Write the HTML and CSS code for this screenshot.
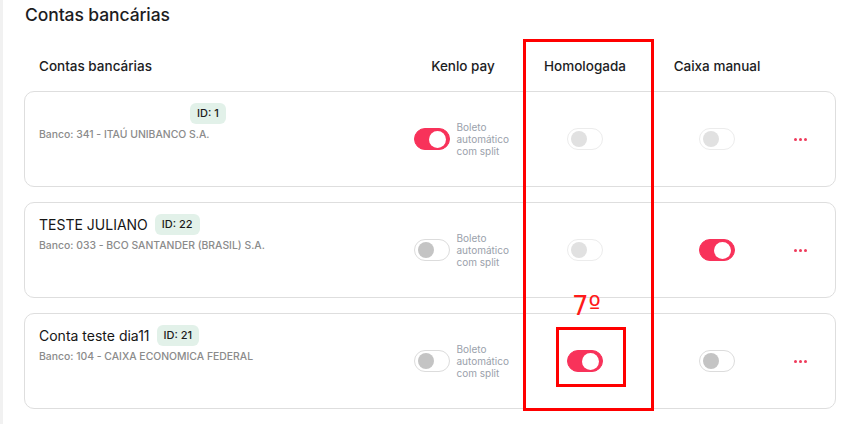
FILE: index.html
```html
<!DOCTYPE html>
<html lang="pt-BR">
<head>
<meta charset="utf-8">
<title>Contas bancárias</title>
<link rel="stylesheet" href="styles.css">
</head>
<body>
<div class="page">
  <h1 class="title">Contas bancárias</h1>
  <div class="row head">
    <div class="c-main">Contas bancárias</div>
    <div class="c-mid">Kenlo pay</div>
    <div class="c-mid">Homologada</div>
    <div class="c-mid">Caixa manual</div>
    <div></div>
  </div>

  <div class="row card">
    <div class="info">
      <div class="name-line"><span class="name blank"></span><span class="badge">ID: 1</span></div>
      <div class="bank">Banco: 341 - ITAÚ UNIBANCO S.A.</div>
    </div>
    <div class="kenlo"><span class="tog on"><span class="knob"></span></span><span class="boleto">Boleto<br>automático<br>com split</span></div>
    <div class="c-mid"><span class="tog dis"><span class="knob"></span></span></div>
    <div class="c-mid"><span class="tog dis"><span class="knob"></span></span></div>
    <div class="dots"><i></i><i></i><i></i></div>
  </div>

  <div class="row card">
    <div class="info">
      <div class="name-line"><span class="name">TESTE JULIANO</span><span class="badge">ID: 22</span></div>
      <div class="bank">Banco: 033 - BCO SANTANDER (BRASIL) S.A.</div>
    </div>
    <div class="kenlo"><span class="tog off"><span class="knob"></span></span><span class="boleto">Boleto<br>automático<br>com split</span></div>
    <div class="c-mid"><span class="tog dis"><span class="knob"></span></span></div>
    <div class="c-mid"><span class="tog on"><span class="knob"></span></span></div>
    <div class="dots"><i></i><i></i><i></i></div>
  </div>

  <div class="row card">
    <div class="info">
      <div class="name-line"><span class="name">Conta teste dia11</span><span class="badge">ID: 21</span></div>
      <div class="bank">Banco: 104 - CAIXA ECONOMICA FEDERAL</div>
    </div>
    <div class="kenlo"><span class="tog off"><span class="knob"></span></span><span class="boleto">Boleto<br>automático<br>com split</span></div>
    <div class="c-mid"><span class="tog on"><span class="knob"></span></span></div>
    <div class="c-mid"><span class="tog off"><span class="knob"></span></span></div>
    <div class="dots"><i></i><i></i><i></i></div>
  </div>
</div>

<div class="mark big"></div>
<div class="mark small"></div>
<div class="mark-label">7º</div>
</body>
</html>
```

FILE: styles.css
```css
* { box-sizing: border-box; }
html, body { margin: 0; padding: 0; background: #fff; }
body {
  font-family: Inter, "Noto Sans", sans-serif;
  color: #1d1d1f;
  width: 855px;
  height: 424px;
  overflow: hidden;
  position: relative;
}
.page {
  border-left: 3px solid #f1f1f1;
  padding: 0 19px 0 21px;
  height: 424px;
}
.title {
  margin: 0;
  height: 30px;
  line-height: 30px;
  font-size: 17.5px;
  font-weight: 500;
  letter-spacing: -0.1px;
  padding-left: 1px;
}
.row {
  display: grid;
  grid-template-columns: 1fr 128px 116px 148px 18px;
  align-items: center;
  padding: 0 26px 0 14px;
  border: 1px solid transparent;
}
.head {
  padding-top: 26px;
  padding-bottom: 15px;
  line-height: 18px;
  font-size: 13.5px;
  font-weight: 500;
}
.c-mid { display: flex; justify-content: center; }
.card {
  height: 96px;
  border: 1px solid #dedede;
  border-radius: 10px;
  margin-bottom: 15px;
}
.info { align-self: start; padding-top: 10px; }
.name-line { display: flex; align-items: center; gap: 7px; height: 22px; }
.name { font-size: 14px; font-weight: 400; color: #161616; }
.name.blank { width: 144px; }
.badge {
  background: #e2f1e9;
  border-radius: 6px;
  font-size: 11px;
  font-weight: 500;
  height: 21px;
  line-height: 21px;
  padding: 0 7px;
  color: #1b1b1b;
}
.bank {
  margin-top: 4px;
  font-size: 10.4px;
  line-height: 14px;
  font-weight: 500;
  color: #8b8b8b;
}
.kenlo { display: flex; align-items: center; justify-content: center; gap: 7px; padding-left: 2px; }
.boleto {
  font-size: 10px;
  line-height: 12px;
  color: #9aa1ab;
  width: 58px;
}
.tog {
  display: flex;
  align-items: center;
  width: 36px;
  height: 22px;
  border-radius: 11px;
  padding: 0 3px;
  border: 1px solid #dcdcdc;
  background: #fff;
  flex: none;
}
.knob { width: 16px; height: 16px; border-radius: 50%; background: #c4c4c4; }
.tog.on { background: #f8325a; border-color: #f8325a; justify-content: flex-end; }
.tog.on .knob { background: #fff; width: 17px; height: 17px; }
.tog.dis { border-color: #ececec; }
.tog.dis .knob { background: #e1e1e1; }
.dots { display: flex; gap: 2px; justify-content: center; }
.dots i { width: 3px; height: 3px; border-radius: 50%; background: #ef3a5b; }

.mark { position: absolute; border: 3px solid #ff0000; }
.mark.big { left: 523px; top: 39px; width: 131px; height: 372px; }
.mark.small { left: 556px; top: 327px; width: 70px; height: 60px; }
.mark-label {
  position: absolute;
  left: 572px;
  top: 290px;
  font-family: "DejaVu Sans", sans-serif;
  font-size: 26px;
  line-height: 32px;
  color: #ff1a1a;
}
```
